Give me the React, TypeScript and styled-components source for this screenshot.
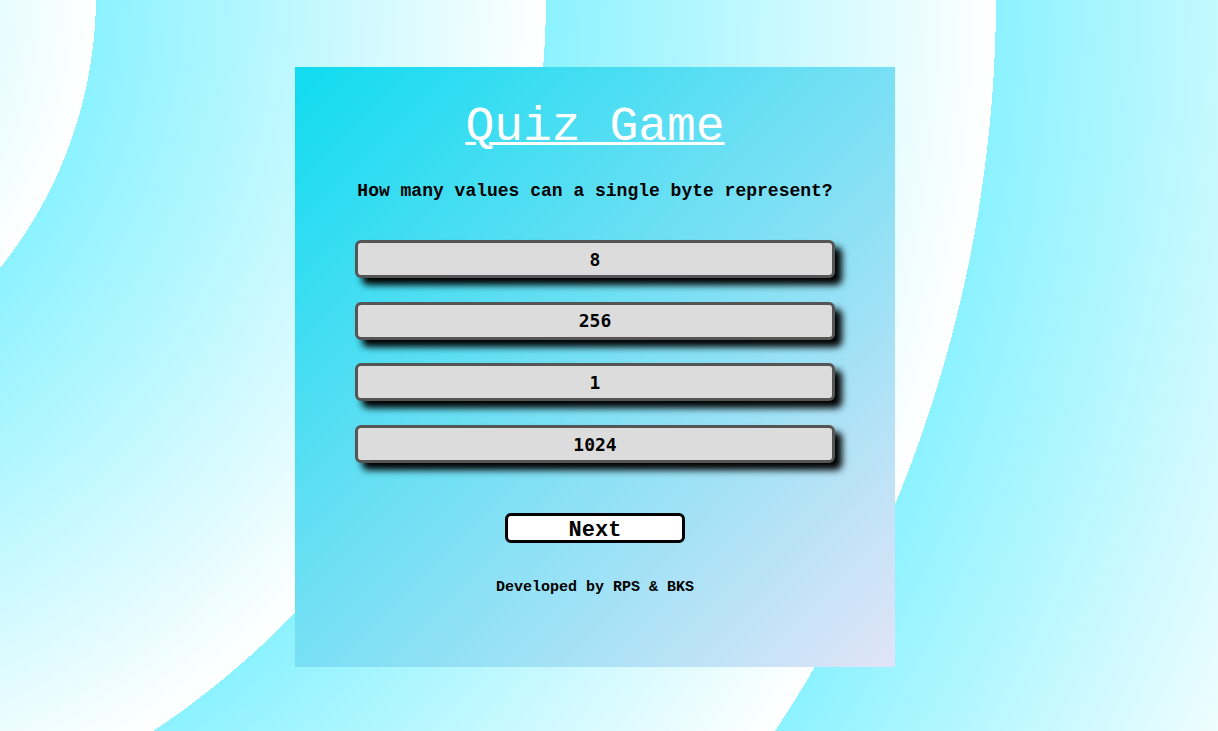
import React from "react";
import styled, { createGlobalStyle } from "styled-components";

const GlobalStyle = createGlobalStyle`
  html, body {
    margin: 0;
    padding: 0;
  }
  body {
    font-family: "Liberation Mono", "Courier New", monospace;
    overflow: hidden;
  }
`;

const Page = styled.main`
  box-sizing: border-box;
  width: 100%;
  height: 731px;
  padding: 67px 28px 0 0;
  display: flex;
  justify-content: center;
  align-items: flex-start;
  background: repeating-radial-gradient(
    circle at -340px -5px,
    #8cf2ff -14px,
    #ffffff 436px
  );
`;

const Card = styled.section`
  box-sizing: border-box;
  width: 600px;
  height: 600px;
  padding-top: 33px;
  display: flex;
  flex-direction: column;
  align-items: center;
  background: linear-gradient(135deg, #10dbf0 0%, #e1e4f8 100%);
`;

const Title = styled.h1`
  margin: 0;
  font-family: "Liberation Mono", "Courier New", monospace;
  font-size: 48px;
  font-weight: 400;
  line-height: normal;
  color: #ffffff;
  text-decoration: underline;
  text-decoration-thickness: 3px;
  text-underline-offset: 2px;
`;

const Question = styled.p`
  margin: 27px 0 0;
  font-family: "Liberation Mono", "Courier New", monospace;
  font-size: 18px;
  font-weight: 700;
  line-height: normal;
  color: #000000;
`;

const Options = styled.div`
  margin-top: 39px;
  display: flex;
  flex-direction: column;
  gap: 23.7px;
`;

const Option = styled.button`
  box-sizing: border-box;
  width: 480px;
  height: 38px;
  padding: 0;
  border: 3px solid #555555;
  border-radius: 6px;
  background: #dcdcdc;
  box-shadow: 7px 7px 7px #000000;
  font-family: "DejaVu Sans Mono", monospace;
  font-size: 18px;
  font-weight: 700;
  color: #000000;
  cursor: pointer;
`;

const NextButton = styled.button`
  box-sizing: border-box;
  margin-top: 50px;
  width: 180px;
  height: 30px;
  padding: 2px 0 0;
  border: 3px solid #000000;
  border-radius: 6px;
  background: #ffffff;
  font-family: "Liberation Mono", "Courier New", monospace;
  font-size: 22px;
  font-weight: 700;
  line-height: normal;
  color: #000000;
  cursor: pointer;
`;

const Footer = styled.p`
  margin: 36px 0 0;
  font-family: "Liberation Mono", "Courier New", monospace;
  font-size: 15px;
  font-weight: 700;
  line-height: normal;
  color: #000000;
`;

const answers = ["8", "256", "1", "1024"];

export default function App() {
  return (
    <>
      <GlobalStyle />
      <Page>
        <Card>
          <Title>Quiz Game</Title>
          <Question>How many values can a single byte represent?</Question>
          <Options>
            {answers.map((a) => (
              <Option key={a}>{a}</Option>
            ))}
          </Options>
          <NextButton>Next</NextButton>
          <Footer>Developed by RPS &amp; BKS</Footer>
        </Card>
      </Page>
    </>
  );
}
